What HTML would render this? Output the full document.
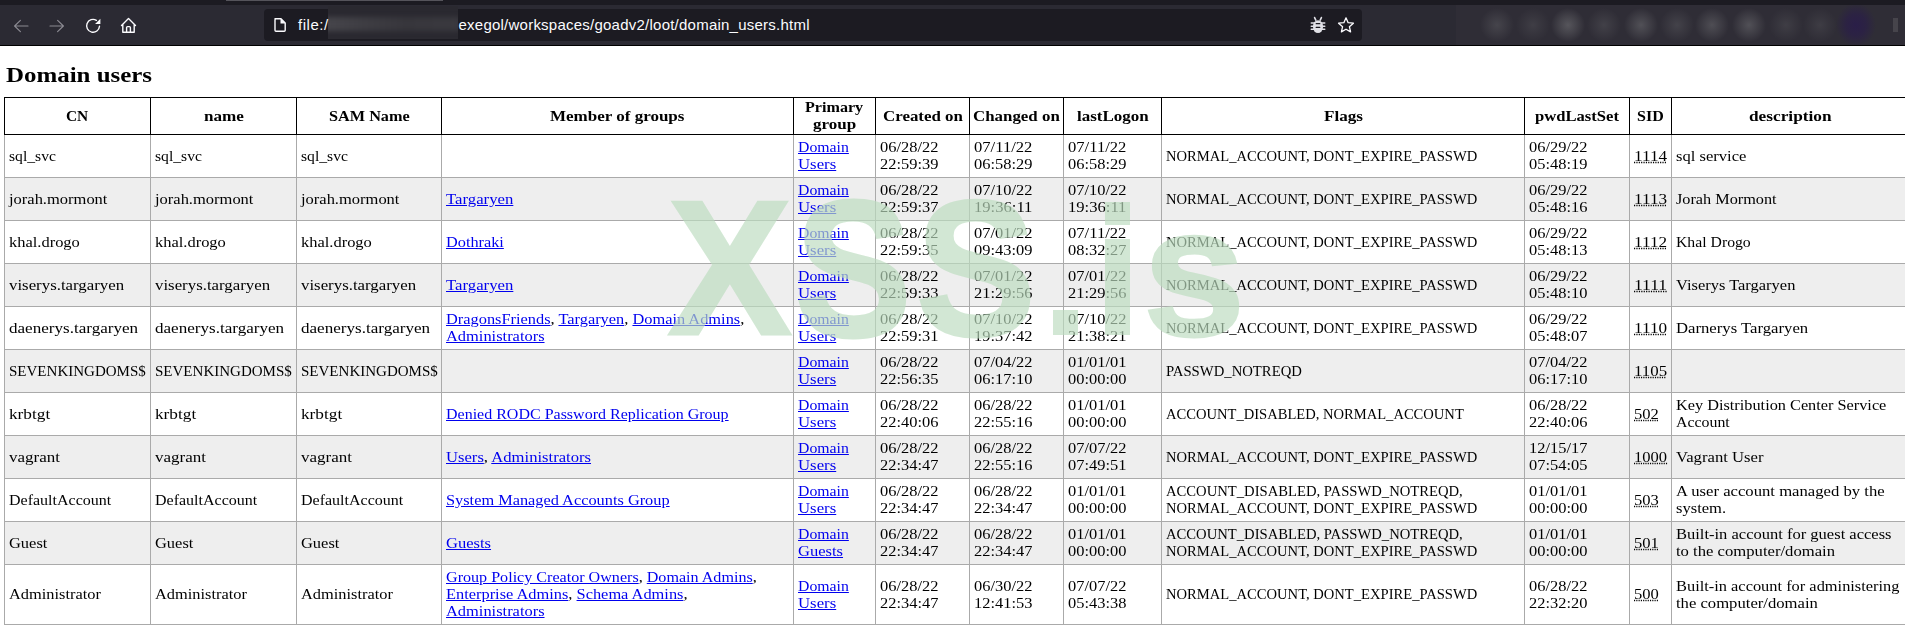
<!DOCTYPE html>
<html><head><meta charset="utf-8"><title>Domain users</title>
<style>
html,body{margin:0;padding:0;width:1905px;height:635px;overflow:hidden;background:#fff;}
body{position:relative;font-family:"Liberation Serif",serif;}
#tb{position:absolute;left:0;top:0;width:1905px;height:46px;background:#2b2a33;overflow:hidden;}
#tb .strip{position:absolute;left:0;top:0;width:1905px;height:5px;background:#1c1b22;}
#tb .tabline{position:absolute;left:226px;top:0;width:217px;height:1px;background:#55545b;}
#tb .bottom{position:absolute;left:0;top:45px;width:1905px;height:1px;background:#000;}
#tb svg{position:absolute;left:0;top:0;}
#url{position:absolute;left:264px;top:9px;width:1098px;height:32px;background:#1c1b22;border-radius:4px;}
.utext{position:absolute;top:16px;font-family:"Liberation Sans",sans-serif;font-size:15px;line-height:17px;color:#fbfbfe;white-space:pre;}
.blur{position:absolute;}
#page{position:absolute;left:0;top:0;width:1905px;height:635px;}
.title{position:absolute;left:5.53px;top:62px;font-weight:bold;font-size:21.2px;line-height:26px;white-space:pre;color:#000;transform:scaleX(1.176);transform-origin:0 0;}
.bg{position:absolute;left:5px;width:1900px;background:#eee;}
.hl{position:absolute;left:4px;width:1905px;height:1px;background:#aaa;}
.vl{position:absolute;width:1px;background:#aaa;}
.k{background:#000;}
.td,.th{position:absolute;transform-origin:0 0;font-size:14.5px;line-height:17px;white-space:pre;color:#000;}
.th{font-weight:bold;}
a{color:#0000ee;text-decoration:underline;text-underline-offset:1px;}
abbr{text-decoration:underline dotted;}
#wm{position:absolute;left:0;top:0;width:1905px;height:635px;opacity:0.68;color:rgb(189,221,192);font-family:"Liberation Sans",sans-serif;font-weight:bold;font-size:192px;line-height:192px;}
#wm .r{position:absolute;background:rgb(189,221,192);}
#wm span{position:absolute;white-space:pre;transform-origin:0 0;-webkit-text-stroke:3px rgb(189,221,192);}

</style></head><body>
<div id="tb">
<div class="strip"></div><div class="tabline"></div><div class="bottom"></div>
<div id="url"></div>
<div style="position:absolute;left:1456px;top:5px;width:449px;height:40px;background:radial-gradient(ellipse 17px 17px at 41px 20px, rgba(110,110,114,0.36), rgba(110,110,114,0.18) 50%, rgba(110,110,114,0) 100%),radial-gradient(ellipse 17px 17px at 77px 20px, rgba(110,110,114,0.26), rgba(110,110,114,0.12) 50%, rgba(110,110,114,0) 100%),radial-gradient(ellipse 17px 17px at 112px 20px, rgba(110,110,114,0.62), rgba(110,110,114,0.32) 50%, rgba(110,110,114,0) 100%),radial-gradient(ellipse 17px 17px at 148px 20px, rgba(110,110,114,0.30), rgba(110,110,114,0.15) 50%, rgba(110,110,114,0) 100%),radial-gradient(ellipse 17px 17px at 185px 20px, rgba(110,110,114,0.54), rgba(110,110,114,0.27) 50%, rgba(110,110,114,0) 100%),radial-gradient(ellipse 17px 17px at 221px 20px, rgba(110,110,114,0.33), rgba(110,110,114,0.16) 50%, rgba(110,110,114,0) 100%),radial-gradient(ellipse 17px 17px at 256px 20px, rgba(110,110,114,0.50), rgba(110,110,114,0.25) 50%, rgba(110,110,114,0) 100%),radial-gradient(ellipse 17px 17px at 293px 20px, rgba(110,110,114,0.54), rgba(110,110,114,0.27) 50%, rgba(110,110,114,0) 100%),radial-gradient(ellipse 17px 17px at 330px 20px, rgba(105,105,108,0.28), rgba(105,105,108,0.13) 50%, rgba(110,110,114,0) 100%),radial-gradient(ellipse 17px 17px at 364px 20px, rgba(110,110,114,0.24), rgba(110,110,114,0.11) 50%, rgba(110,110,114,0) 100%),radial-gradient(ellipse 20px 22px at 400px 20px, rgba(42,30,72,1), rgba(42,30,72,0.7) 50%, rgba(42,30,72,0) 100%),#2f2d36;"></div>
<div style="position:absolute;left:1893px;top:18px;width:5px;height:14px;background:rgba(140,140,140,0.25);"></div>
<div style="position:absolute;left:328px;top:6px;width:130px;height:33px;overflow:hidden;background:#2a2930;"><div style="position:absolute;left:-4px;top:11px;width:136px;height:14px;background:linear-gradient(90deg,#47464c 0%,#3e3d43 30%,#37363c 60%,#3a393f 100%);filter:blur(2.5px);"></div></div>
<svg width="1905" height="46" viewBox="0 0 1905 46">
 <g fill="none" stroke="#8b8a92" stroke-width="1.15" stroke-linecap="round" stroke-linejoin="round">
  <path d="M14.6 26 H28 M20.4 20.3 L14.6 26 L20.4 31.7"/>
  <path d="M50 26 H63.4 M57.6 20.3 L63.4 26 L57.6 31.7"/>
 </g>
 <g fill="none" stroke="#fbfbfe" stroke-width="1.4" stroke-linecap="round" stroke-linejoin="round">
  <path d="M99.5 26.3 A6.45 6.45 0 1 1 96.4 20.3"/>
  <path d="M121.5 25.5 L128.5 18.5 L135.5 25.5 M122.8 24.5 V32.3 H134.2 V24.5 M126.6 32.3 V27.6 Q126.6 26.6 127.6 26.6 H129.4 Q130.4 26.6 130.4 27.6 V32.3"/>
  <path d="M275 18.8 H281 L285.2 23 V30.3 Q285.2 31.3 284.2 31.3 H276 Q275 31.3 275 30.3 V19.8 Q275 18.8 276 18.8 Z"/>
  <path d="M1346.00 17.80 L1348.12 22.69 L1353.42 23.19 L1349.42 26.71 L1350.58 31.91 L1346.00 29.20 L1341.42 31.91 L1342.58 26.71 L1338.58 23.19 L1343.88 22.69 Z" stroke-width="1.3"/>
 </g>
 <path d="M100.4 18.7 V24 H95.1 Z" fill="#fbfbfe"/>
 <path d="M280.5 18.8 V23.5 H285.2 Z" fill="#fbfbfe"/>
 <g fill="#e0e0e6">
  <ellipse cx="1318" cy="26.6" rx="5.1" ry="6.4"/>
  <rect x="1310.5" y="22.2" width="15" height="1.5" rx="0.75"/>
  <rect x="1310.5" y="25.4" width="15" height="1.5" rx="0.75"/>
  <rect x="1310.5" y="28.6" width="15" height="1.5" rx="0.75"/>
  <path d="M1314.6 17.6 L1315.8 20.2 M1321.4 17.6 L1320.2 20.2" stroke="#e0e0e6" stroke-width="1.6" stroke-linecap="round"/>
 </g>
 <g fill="#1c1b22">
  <rect x="1315.6" y="23" width="4.8" height="1.3" rx="0.6"/>
  <rect x="1315.6" y="26.8" width="4.8" height="1.3" rx="0.6"/>
 </g>
</svg>
<div class="utext" style="left:298px;letter-spacing:0.55px">file:/</div>
<div class="utext" style="left:458.5px;letter-spacing:0.235px">exegol/workspaces/goadv2/loot/domain_users.html</div>
</div>

<div id="page">
<div class="title">Domain users</div>
<div class="bg" style="top:178px;height:42px"></div><div class="bg" style="top:264px;height:42px"></div><div class="bg" style="top:350px;height:42px"></div><div class="bg" style="top:436px;height:42px"></div><div class="bg" style="top:522px;height:42px"></div><div class="hl k" style="top:97px"></div><div class="hl k" style="top:134px"></div><div class="hl" style="top:177px"></div><div class="hl" style="top:220px"></div><div class="hl" style="top:263px"></div><div class="hl" style="top:306px"></div><div class="hl" style="top:349px"></div><div class="hl" style="top:392px"></div><div class="hl" style="top:435px"></div><div class="hl" style="top:478px"></div><div class="hl" style="top:521px"></div><div class="hl" style="top:564px"></div><div class="hl" style="top:624px"></div><div class="vl k" style="left:4px;top:97px;height:37px"></div><div class="vl" style="left:4px;top:135px;height:490px"></div><div class="vl k" style="left:150px;top:97px;height:37px"></div><div class="vl" style="left:150px;top:135px;height:490px"></div><div class="vl k" style="left:296px;top:97px;height:37px"></div><div class="vl" style="left:296px;top:135px;height:490px"></div><div class="vl k" style="left:441px;top:97px;height:37px"></div><div class="vl" style="left:441px;top:135px;height:490px"></div><div class="vl k" style="left:793px;top:97px;height:37px"></div><div class="vl" style="left:793px;top:135px;height:490px"></div><div class="vl k" style="left:875px;top:97px;height:37px"></div><div class="vl" style="left:875px;top:135px;height:490px"></div><div class="vl k" style="left:969px;top:97px;height:37px"></div><div class="vl" style="left:969px;top:135px;height:490px"></div><div class="vl k" style="left:1063px;top:97px;height:37px"></div><div class="vl" style="left:1063px;top:135px;height:490px"></div><div class="vl k" style="left:1161px;top:97px;height:37px"></div><div class="vl" style="left:1161px;top:135px;height:490px"></div><div class="vl k" style="left:1524px;top:97px;height:37px"></div><div class="vl" style="left:1524px;top:135px;height:490px"></div><div class="vl k" style="left:1629px;top:97px;height:37px"></div><div class="vl" style="left:1629px;top:135px;height:490px"></div><div class="vl k" style="left:1671px;top:97px;height:37px"></div><div class="vl" style="left:1671px;top:135px;height:490px"></div><div class="vl k" style="left:1909px;top:97px;height:37px"></div><div class="vl" style="left:1909px;top:135px;height:490px"></div>
<div class="th" style="left:66.39px;top:108px;transform:scaleX(1.0614)">CN</div>
<div class="th" style="left:203.55px;top:108px;transform:scaleX(1.1795)">name</div>
<div class="th" style="left:328.64px;top:108px;transform:scaleX(1.1199)">SAM Name</div>
<div class="th" style="left:550.29px;top:108px;transform:scaleX(1.1724)">Member of groups</div>
<div class="th" style="left:805.43px;top:99px;transform:scaleX(1.1110)">Primary</div>
<div class="th" style="left:812.92px;top:116px;transform:scaleX(1.1725)">group</div>
<div class="th" style="left:882.55px;top:108px;transform:scaleX(1.1648)">Created on</div>
<div class="th" style="left:973.11px;top:108px;transform:scaleX(1.1641)">Changed on</div>
<div class="th" style="left:1076.65px;top:108px;transform:scaleX(1.1710)">lastLogon</div>
<div class="th" style="left:1323.50px;top:108px;transform:scaleX(1.1808)">Flags</div>
<div class="th" style="left:1535.04px;top:108px;transform:scaleX(1.1446)">pwdLastSet</div>
<div class="th" style="left:1637.13px;top:108px;transform:scaleX(1.1061)">SID</div>
<div class="th" style="left:1749.23px;top:108px;transform:scaleX(1.1914)">description</div>
<div class="td" style="left:9.00px;top:148px;transform:scaleX(1.0792)">sql_svc</div>
<div class="td" style="left:155.00px;top:148px;transform:scaleX(1.0792)">sql_svc</div>
<div class="td" style="left:301.00px;top:148px;transform:scaleX(1.0792)">sql_svc</div>
<div class="td" style="left:798.00px;top:139px;transform:scaleX(1.0887)"><a>Domain</a></div>
<div class="td" style="left:798.00px;top:156px;transform:scaleX(1.1570)"><a>Users</a></div>
<div class="td" style="left:880.00px;top:139px;transform:scaleX(1.1324)">06/28/22</div>
<div class="td" style="left:880.00px;top:156px;transform:scaleX(1.1324)">22:59:39</div>
<div class="td" style="left:974.00px;top:139px;transform:scaleX(1.1444)">07/11/22</div>
<div class="td" style="left:974.00px;top:156px;transform:scaleX(1.1324)">06:58:29</div>
<div class="td" style="left:1068.00px;top:139px;transform:scaleX(1.1444)">07/11/22</div>
<div class="td" style="left:1068.00px;top:156px;transform:scaleX(1.1324)">06:58:29</div>
<div class="td" style="left:1166.00px;top:148px;transform:scaleX(1.0062)">NORMAL_ACCOUNT, DONT_EXPIRE_PASSWD</div>
<div class="td" style="left:1529.00px;top:139px;transform:scaleX(1.1324)">06/29/22</div>
<div class="td" style="left:1529.00px;top:156px;transform:scaleX(1.1324)">05:48:19</div>
<div class="td" style="left:1634.00px;top:148px;transform:scaleX(1.1848)"><abbr>1114</abbr></div>
<div class="td" style="left:1676.00px;top:148px;transform:scaleX(1.1418)">sql service</div>
<div class="td" style="left:9.00px;top:191px;transform:scaleX(1.1370)">jorah.mormont</div>
<div class="td" style="left:155.00px;top:191px;transform:scaleX(1.1370)">jorah.mormont</div>
<div class="td" style="left:301.00px;top:191px;transform:scaleX(1.1370)">jorah.mormont</div>
<div class="td" style="left:446.00px;top:191px;transform:scaleX(1.1548)"><a>Targaryen</a></div>
<div class="td" style="left:798.00px;top:182px;transform:scaleX(1.0887)"><a>Domain</a></div>
<div class="td" style="left:798.00px;top:199px;transform:scaleX(1.1570)"><a>Users</a></div>
<div class="td" style="left:880.00px;top:182px;transform:scaleX(1.1324)">06/28/22</div>
<div class="td" style="left:880.00px;top:199px;transform:scaleX(1.1324)">22:59:37</div>
<div class="td" style="left:974.00px;top:182px;transform:scaleX(1.1324)">07/10/22</div>
<div class="td" style="left:974.00px;top:199px;transform:scaleX(1.1444)">19:36:11</div>
<div class="td" style="left:1068.00px;top:182px;transform:scaleX(1.1324)">07/10/22</div>
<div class="td" style="left:1068.00px;top:199px;transform:scaleX(1.1444)">19:36:11</div>
<div class="td" style="left:1166.00px;top:191px;transform:scaleX(1.0062)">NORMAL_ACCOUNT, DONT_EXPIRE_PASSWD</div>
<div class="td" style="left:1529.00px;top:182px;transform:scaleX(1.1324)">06/29/22</div>
<div class="td" style="left:1529.00px;top:199px;transform:scaleX(1.1324)">05:48:16</div>
<div class="td" style="left:1634.00px;top:191px;transform:scaleX(1.1848)"><abbr>1113</abbr></div>
<div class="td" style="left:1676.00px;top:191px;transform:scaleX(1.1202)">Jorah Mormont</div>
<div class="td" style="left:9.00px;top:234px;transform:scaleX(1.1343)">khal.drogo</div>
<div class="td" style="left:155.00px;top:234px;transform:scaleX(1.1343)">khal.drogo</div>
<div class="td" style="left:301.00px;top:234px;transform:scaleX(1.1343)">khal.drogo</div>
<div class="td" style="left:446.00px;top:234px;transform:scaleX(1.1223)"><a>Dothraki</a></div>
<div class="td" style="left:798.00px;top:225px;transform:scaleX(1.0887)"><a>Domain</a></div>
<div class="td" style="left:798.00px;top:242px;transform:scaleX(1.1570)"><a>Users</a></div>
<div class="td" style="left:880.00px;top:225px;transform:scaleX(1.1324)">06/28/22</div>
<div class="td" style="left:880.00px;top:242px;transform:scaleX(1.1324)">22:59:35</div>
<div class="td" style="left:974.00px;top:225px;transform:scaleX(1.1324)">07/01/22</div>
<div class="td" style="left:974.00px;top:242px;transform:scaleX(1.1324)">09:43:09</div>
<div class="td" style="left:1068.00px;top:225px;transform:scaleX(1.1444)">07/11/22</div>
<div class="td" style="left:1068.00px;top:242px;transform:scaleX(1.1324)">08:32:27</div>
<div class="td" style="left:1166.00px;top:234px;transform:scaleX(1.0062)">NORMAL_ACCOUNT, DONT_EXPIRE_PASSWD</div>
<div class="td" style="left:1529.00px;top:225px;transform:scaleX(1.1324)">06/29/22</div>
<div class="td" style="left:1529.00px;top:242px;transform:scaleX(1.1324)">05:48:13</div>
<div class="td" style="left:1634.00px;top:234px;transform:scaleX(1.1848)"><abbr>1112</abbr></div>
<div class="td" style="left:1676.00px;top:234px;transform:scaleX(1.0853)">Khal Drogo</div>
<div class="td" style="left:9.00px;top:277px;transform:scaleX(1.1606)">viserys.targaryen</div>
<div class="td" style="left:155.00px;top:277px;transform:scaleX(1.1606)">viserys.targaryen</div>
<div class="td" style="left:301.00px;top:277px;transform:scaleX(1.1606)">viserys.targaryen</div>
<div class="td" style="left:446.00px;top:277px;transform:scaleX(1.1548)"><a>Targaryen</a></div>
<div class="td" style="left:798.00px;top:268px;transform:scaleX(1.0887)"><a>Domain</a></div>
<div class="td" style="left:798.00px;top:285px;transform:scaleX(1.1570)"><a>Users</a></div>
<div class="td" style="left:880.00px;top:268px;transform:scaleX(1.1324)">06/28/22</div>
<div class="td" style="left:880.00px;top:285px;transform:scaleX(1.1324)">22:59:33</div>
<div class="td" style="left:974.00px;top:268px;transform:scaleX(1.1324)">07/01/22</div>
<div class="td" style="left:974.00px;top:285px;transform:scaleX(1.1324)">21:29:56</div>
<div class="td" style="left:1068.00px;top:268px;transform:scaleX(1.1324)">07/01/22</div>
<div class="td" style="left:1068.00px;top:285px;transform:scaleX(1.1324)">21:29:56</div>
<div class="td" style="left:1166.00px;top:277px;transform:scaleX(1.0062)">NORMAL_ACCOUNT, DONT_EXPIRE_PASSWD</div>
<div class="td" style="left:1529.00px;top:268px;transform:scaleX(1.1324)">06/29/22</div>
<div class="td" style="left:1529.00px;top:285px;transform:scaleX(1.1324)">05:48:10</div>
<div class="td" style="left:1634.00px;top:277px;transform:scaleX(1.2081)"><abbr>1111</abbr></div>
<div class="td" style="left:1676.00px;top:277px;transform:scaleX(1.1359)">Viserys Targaryen</div>
<div class="td" style="left:9.00px;top:320px;transform:scaleX(1.1774)">daenerys.targaryen</div>
<div class="td" style="left:155.00px;top:320px;transform:scaleX(1.1774)">daenerys.targaryen</div>
<div class="td" style="left:301.00px;top:320px;transform:scaleX(1.1774)">daenerys.targaryen</div>
<div class="td" style="left:446.00px;top:311px;transform:scaleX(1.1286)"><a>DragonsFriends</a>, <a>Targaryen</a>, <a>Domain Admins</a>,</div>
<div class="td" style="left:446.00px;top:328px;transform:scaleX(1.1325)"><a>Administrators</a></div>
<div class="td" style="left:798.00px;top:311px;transform:scaleX(1.0887)"><a>Domain</a></div>
<div class="td" style="left:798.00px;top:328px;transform:scaleX(1.1570)"><a>Users</a></div>
<div class="td" style="left:880.00px;top:311px;transform:scaleX(1.1324)">06/28/22</div>
<div class="td" style="left:880.00px;top:328px;transform:scaleX(1.1324)">22:59:31</div>
<div class="td" style="left:974.00px;top:311px;transform:scaleX(1.1324)">07/10/22</div>
<div class="td" style="left:974.00px;top:328px;transform:scaleX(1.1324)">19:37:42</div>
<div class="td" style="left:1068.00px;top:311px;transform:scaleX(1.1324)">07/10/22</div>
<div class="td" style="left:1068.00px;top:328px;transform:scaleX(1.1324)">21:38:21</div>
<div class="td" style="left:1166.00px;top:320px;transform:scaleX(1.0062)">NORMAL_ACCOUNT, DONT_EXPIRE_PASSWD</div>
<div class="td" style="left:1529.00px;top:311px;transform:scaleX(1.1324)">06/29/22</div>
<div class="td" style="left:1529.00px;top:328px;transform:scaleX(1.1324)">05:48:07</div>
<div class="td" style="left:1634.00px;top:320px;transform:scaleX(1.1848)"><abbr>1110</abbr></div>
<div class="td" style="left:1676.00px;top:320px;transform:scaleX(1.1510)">Darnerys Targaryen</div>
<div class="td" style="left:9.00px;top:363px;transform:scaleX(1.0356)">SEVENKINGDOMS$</div>
<div class="td" style="left:155.00px;top:363px;transform:scaleX(1.0356)">SEVENKINGDOMS$</div>
<div class="td" style="left:301.00px;top:363px;transform:scaleX(1.0356)">SEVENKINGDOMS$</div>
<div class="td" style="left:798.00px;top:354px;transform:scaleX(1.0887)"><a>Domain</a></div>
<div class="td" style="left:798.00px;top:371px;transform:scaleX(1.1570)"><a>Users</a></div>
<div class="td" style="left:880.00px;top:354px;transform:scaleX(1.1324)">06/28/22</div>
<div class="td" style="left:880.00px;top:371px;transform:scaleX(1.1324)">22:56:35</div>
<div class="td" style="left:974.00px;top:354px;transform:scaleX(1.1324)">07/04/22</div>
<div class="td" style="left:974.00px;top:371px;transform:scaleX(1.1324)">06:17:10</div>
<div class="td" style="left:1068.00px;top:354px;transform:scaleX(1.1324)">01/01/01</div>
<div class="td" style="left:1068.00px;top:371px;transform:scaleX(1.1324)">00:00:00</div>
<div class="td" style="left:1166.00px;top:363px;transform:scaleX(1.0139)">PASSWD_NOTREQD</div>
<div class="td" style="left:1529.00px;top:354px;transform:scaleX(1.1324)">07/04/22</div>
<div class="td" style="left:1529.00px;top:371px;transform:scaleX(1.1324)">06:17:10</div>
<div class="td" style="left:1634.00px;top:363px;transform:scaleX(1.1624)"><abbr>1105</abbr></div>
<div class="td" style="left:9.00px;top:406px;transform:scaleX(1.1890)">krbtgt</div>
<div class="td" style="left:155.00px;top:406px;transform:scaleX(1.1890)">krbtgt</div>
<div class="td" style="left:301.00px;top:406px;transform:scaleX(1.1890)">krbtgt</div>
<div class="td" style="left:446.00px;top:406px;transform:scaleX(1.1033)"><a>Denied RODC Password Replication Group</a></div>
<div class="td" style="left:798.00px;top:397px;transform:scaleX(1.0887)"><a>Domain</a></div>
<div class="td" style="left:798.00px;top:414px;transform:scaleX(1.1570)"><a>Users</a></div>
<div class="td" style="left:880.00px;top:397px;transform:scaleX(1.1324)">06/28/22</div>
<div class="td" style="left:880.00px;top:414px;transform:scaleX(1.1324)">22:40:06</div>
<div class="td" style="left:974.00px;top:397px;transform:scaleX(1.1324)">06/28/22</div>
<div class="td" style="left:974.00px;top:414px;transform:scaleX(1.1324)">22:55:16</div>
<div class="td" style="left:1068.00px;top:397px;transform:scaleX(1.1324)">01/01/01</div>
<div class="td" style="left:1068.00px;top:414px;transform:scaleX(1.1324)">00:00:00</div>
<div class="td" style="left:1166.00px;top:406px;transform:scaleX(1.0045)">ACCOUNT_DISABLED, NORMAL_ACCOUNT</div>
<div class="td" style="left:1529.00px;top:397px;transform:scaleX(1.1324)">06/28/22</div>
<div class="td" style="left:1529.00px;top:414px;transform:scaleX(1.1324)">22:40:06</div>
<div class="td" style="left:1634.00px;top:406px;transform:scaleX(1.1408)"><abbr>502</abbr></div>
<div class="td" style="left:1676.00px;top:397px;transform:scaleX(1.1234)">Key Distribution Center Service</div>
<div class="td" style="left:1676.00px;top:414px;transform:scaleX(1.0941)">Account</div>
<div class="td" style="left:9.00px;top:449px;transform:scaleX(1.1725)">vagrant</div>
<div class="td" style="left:155.00px;top:449px;transform:scaleX(1.1725)">vagrant</div>
<div class="td" style="left:301.00px;top:449px;transform:scaleX(1.1725)">vagrant</div>
<div class="td" style="left:446.00px;top:449px;transform:scaleX(1.1465)"><a>Users</a>, <a>Administrators</a></div>
<div class="td" style="left:798.00px;top:440px;transform:scaleX(1.0887)"><a>Domain</a></div>
<div class="td" style="left:798.00px;top:457px;transform:scaleX(1.1570)"><a>Users</a></div>
<div class="td" style="left:880.00px;top:440px;transform:scaleX(1.1324)">06/28/22</div>
<div class="td" style="left:880.00px;top:457px;transform:scaleX(1.1324)">22:34:47</div>
<div class="td" style="left:974.00px;top:440px;transform:scaleX(1.1324)">06/28/22</div>
<div class="td" style="left:974.00px;top:457px;transform:scaleX(1.1324)">22:55:16</div>
<div class="td" style="left:1068.00px;top:440px;transform:scaleX(1.1324)">07/07/22</div>
<div class="td" style="left:1068.00px;top:457px;transform:scaleX(1.1324)">07:49:51</div>
<div class="td" style="left:1166.00px;top:449px;transform:scaleX(1.0062)">NORMAL_ACCOUNT, DONT_EXPIRE_PASSWD</div>
<div class="td" style="left:1529.00px;top:440px;transform:scaleX(1.1324)">12/15/17</div>
<div class="td" style="left:1529.00px;top:457px;transform:scaleX(1.1324)">07:54:05</div>
<div class="td" style="left:1634.00px;top:449px;transform:scaleX(1.1408)"><abbr>1000</abbr></div>
<div class="td" style="left:1676.00px;top:449px;transform:scaleX(1.1498)">Vagrant User</div>
<div class="td" style="left:9.00px;top:492px;transform:scaleX(1.1034)">DefaultAccount</div>
<div class="td" style="left:155.00px;top:492px;transform:scaleX(1.1034)">DefaultAccount</div>
<div class="td" style="left:301.00px;top:492px;transform:scaleX(1.1034)">DefaultAccount</div>
<div class="td" style="left:446.00px;top:492px;transform:scaleX(1.1263)"><a>System Managed Accounts Group</a></div>
<div class="td" style="left:798.00px;top:483px;transform:scaleX(1.0887)"><a>Domain</a></div>
<div class="td" style="left:798.00px;top:500px;transform:scaleX(1.1570)"><a>Users</a></div>
<div class="td" style="left:880.00px;top:483px;transform:scaleX(1.1324)">06/28/22</div>
<div class="td" style="left:880.00px;top:500px;transform:scaleX(1.1324)">22:34:47</div>
<div class="td" style="left:974.00px;top:483px;transform:scaleX(1.1324)">06/28/22</div>
<div class="td" style="left:974.00px;top:500px;transform:scaleX(1.1324)">22:34:47</div>
<div class="td" style="left:1068.00px;top:483px;transform:scaleX(1.1324)">01/01/01</div>
<div class="td" style="left:1068.00px;top:500px;transform:scaleX(1.1324)">00:00:00</div>
<div class="td" style="left:1166.00px;top:483px;transform:scaleX(1.0096)">ACCOUNT_DISABLED, PASSWD_NOTREQD,</div>
<div class="td" style="left:1166.00px;top:500px;transform:scaleX(1.0062)">NORMAL_ACCOUNT, DONT_EXPIRE_PASSWD</div>
<div class="td" style="left:1529.00px;top:483px;transform:scaleX(1.1324)">01/01/01</div>
<div class="td" style="left:1529.00px;top:500px;transform:scaleX(1.1324)">00:00:00</div>
<div class="td" style="left:1634.00px;top:492px;transform:scaleX(1.1408)"><abbr>503</abbr></div>
<div class="td" style="left:1676.00px;top:483px;transform:scaleX(1.1488)">A user account managed by the</div>
<div class="td" style="left:1676.00px;top:500px;transform:scaleX(1.1403)">system.</div>
<div class="td" style="left:9.00px;top:535px;transform:scaleX(1.1335)">Guest</div>
<div class="td" style="left:155.00px;top:535px;transform:scaleX(1.1335)">Guest</div>
<div class="td" style="left:301.00px;top:535px;transform:scaleX(1.1335)">Guest</div>
<div class="td" style="left:446.00px;top:535px;transform:scaleX(1.1405)"><a>Guests</a></div>
<div class="td" style="left:798.00px;top:526px;transform:scaleX(1.0887)"><a>Domain</a></div>
<div class="td" style="left:798.00px;top:543px;transform:scaleX(1.1405)"><a>Guests</a></div>
<div class="td" style="left:880.00px;top:526px;transform:scaleX(1.1324)">06/28/22</div>
<div class="td" style="left:880.00px;top:543px;transform:scaleX(1.1324)">22:34:47</div>
<div class="td" style="left:974.00px;top:526px;transform:scaleX(1.1324)">06/28/22</div>
<div class="td" style="left:974.00px;top:543px;transform:scaleX(1.1324)">22:34:47</div>
<div class="td" style="left:1068.00px;top:526px;transform:scaleX(1.1324)">01/01/01</div>
<div class="td" style="left:1068.00px;top:543px;transform:scaleX(1.1324)">00:00:00</div>
<div class="td" style="left:1166.00px;top:526px;transform:scaleX(1.0096)">ACCOUNT_DISABLED, PASSWD_NOTREQD,</div>
<div class="td" style="left:1166.00px;top:543px;transform:scaleX(1.0062)">NORMAL_ACCOUNT, DONT_EXPIRE_PASSWD</div>
<div class="td" style="left:1529.00px;top:526px;transform:scaleX(1.1324)">01/01/01</div>
<div class="td" style="left:1529.00px;top:543px;transform:scaleX(1.1324)">00:00:00</div>
<div class="td" style="left:1634.00px;top:535px;transform:scaleX(1.1408)"><abbr>501</abbr></div>
<div class="td" style="left:1676.00px;top:526px;transform:scaleX(1.1388)">Built-in account for guest access</div>
<div class="td" style="left:1676.00px;top:543px;transform:scaleX(1.1479)">to the computer/domain</div>
<div class="td" style="left:9.00px;top:586px;transform:scaleX(1.1291)">Administrator</div>
<div class="td" style="left:155.00px;top:586px;transform:scaleX(1.1291)">Administrator</div>
<div class="td" style="left:301.00px;top:586px;transform:scaleX(1.1291)">Administrator</div>
<div class="td" style="left:446.00px;top:569px;transform:scaleX(1.1102)"><a>Group Policy Creator Owners</a>, <a>Domain Admins</a>,</div>
<div class="td" style="left:446.00px;top:586px;transform:scaleX(1.1294)"><a>Enterprise Admins</a>, <a>Schema Admins</a>,</div>
<div class="td" style="left:446.00px;top:603px;transform:scaleX(1.1325)"><a>Administrators</a></div>
<div class="td" style="left:798.00px;top:578px;transform:scaleX(1.0887)"><a>Domain</a></div>
<div class="td" style="left:798.00px;top:595px;transform:scaleX(1.1570)"><a>Users</a></div>
<div class="td" style="left:880.00px;top:578px;transform:scaleX(1.1324)">06/28/22</div>
<div class="td" style="left:880.00px;top:595px;transform:scaleX(1.1324)">22:34:47</div>
<div class="td" style="left:974.00px;top:578px;transform:scaleX(1.1324)">06/30/22</div>
<div class="td" style="left:974.00px;top:595px;transform:scaleX(1.1324)">12:41:53</div>
<div class="td" style="left:1068.00px;top:578px;transform:scaleX(1.1324)">07/07/22</div>
<div class="td" style="left:1068.00px;top:595px;transform:scaleX(1.1324)">05:43:38</div>
<div class="td" style="left:1166.00px;top:586px;transform:scaleX(1.0062)">NORMAL_ACCOUNT, DONT_EXPIRE_PASSWD</div>
<div class="td" style="left:1529.00px;top:578px;transform:scaleX(1.1324)">06/28/22</div>
<div class="td" style="left:1529.00px;top:595px;transform:scaleX(1.1324)">22:32:20</div>
<div class="td" style="left:1634.00px;top:586px;transform:scaleX(1.1408)"><abbr>500</abbr></div>
<div class="td" style="left:1676.00px;top:578px;transform:scaleX(1.1303)">Built-in account for administering</div>
<div class="td" style="left:1676.00px;top:595px;transform:scaleX(1.1472)">the computer/domain</div>
<div id="wm"><span style="left:668.00px;top:173.11px;transform:scale(0.9648,0.9963)">X</span><span style="left:795.36px;top:172.21px;transform:scale(0.9110,1.0109)">S</span><span style="left:916.25px;top:172.30px;transform:scale(0.9364,1.0072)">S</span><span style="left:1142.71px;top:180.44px;transform:scale(0.9579,0.9579)">s</span><div class="r" style="left:1053px;top:310px;width:25px;height:24.5px"></div><div class="r" style="left:1105px;top:202px;width:25px;height:23px"></div><div class="r" style="left:1105px;top:239px;width:25px;height:95.5px"></div></div>
</div>
</body></html>
